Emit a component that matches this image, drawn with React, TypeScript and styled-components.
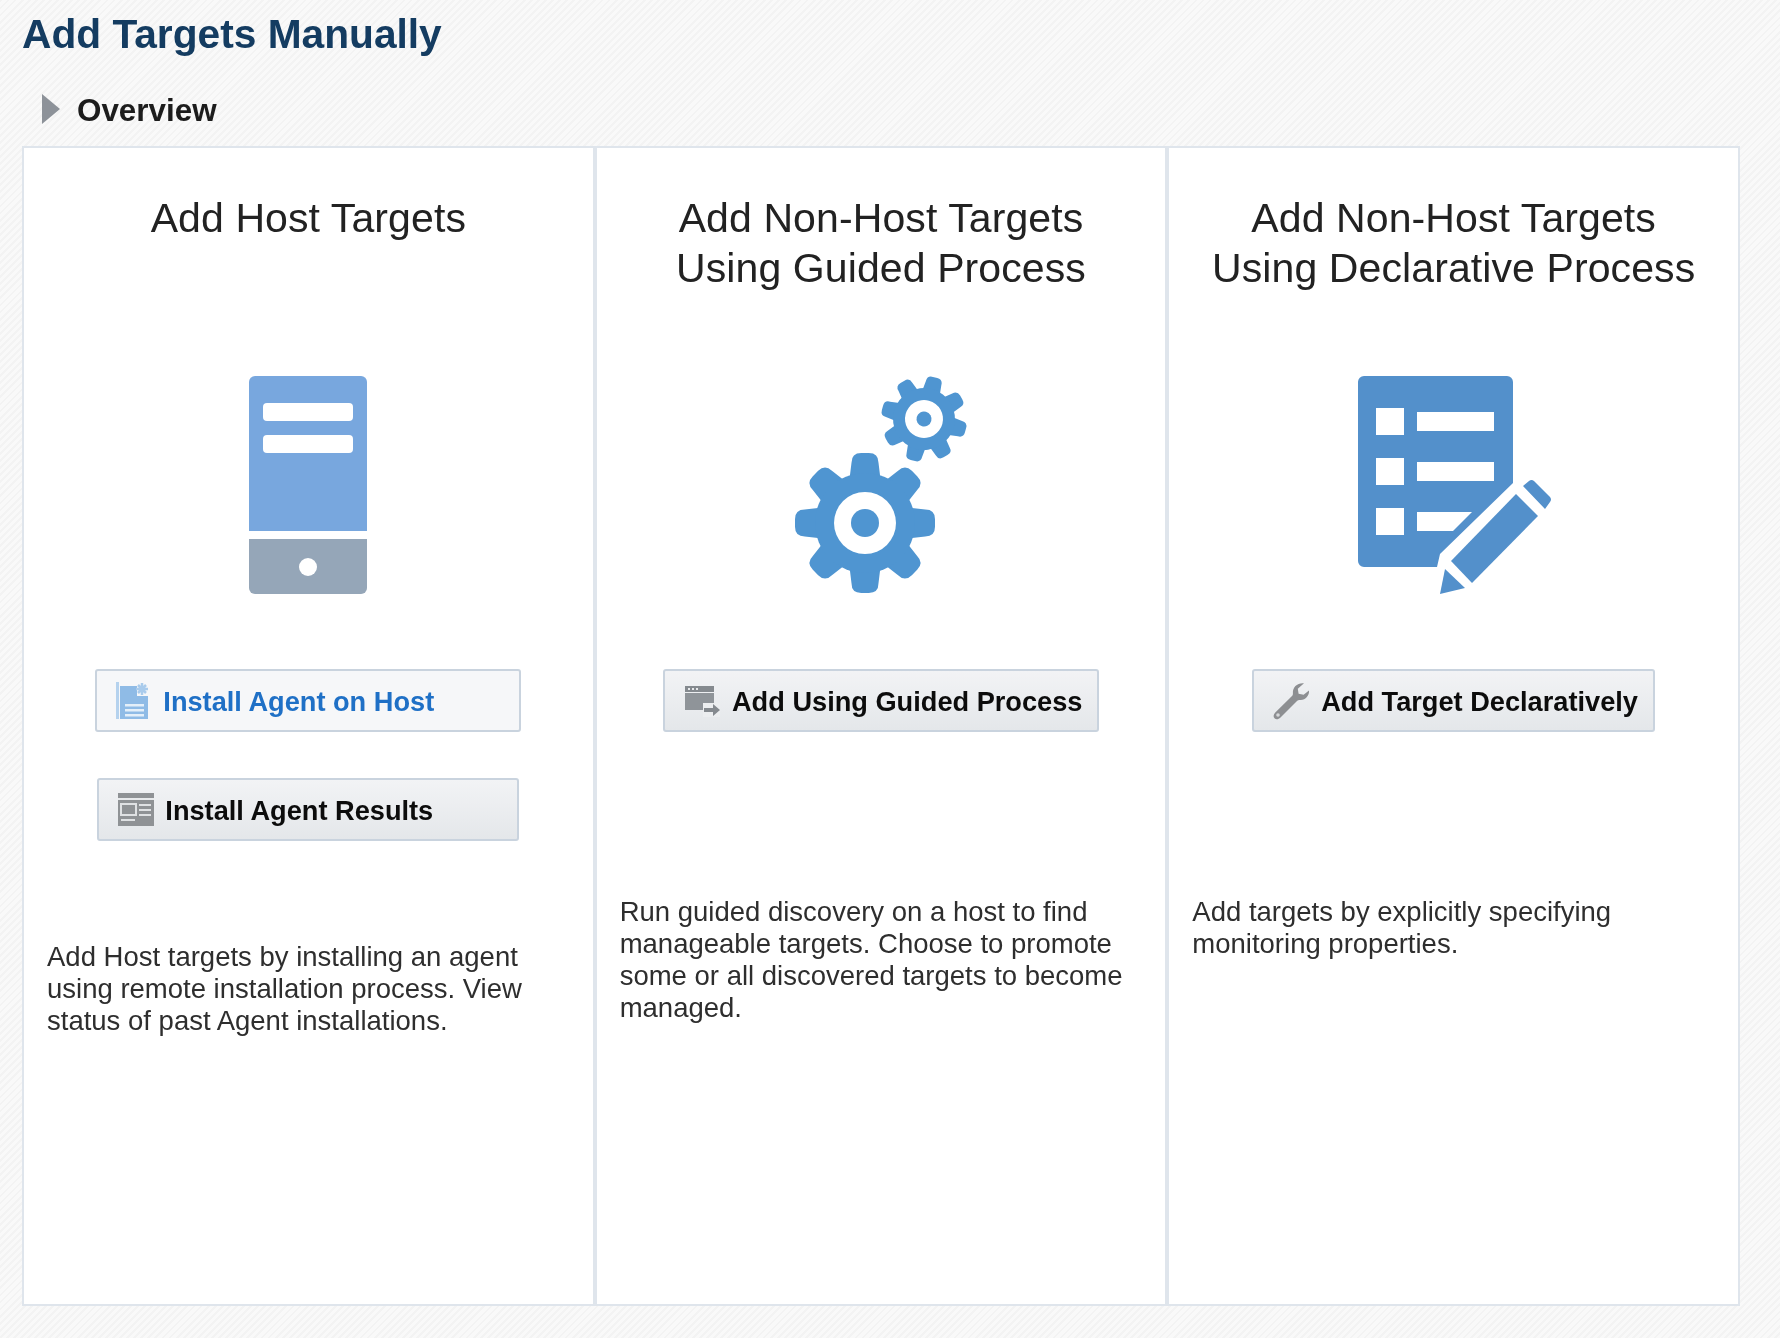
import React from "react";
import styled, { createGlobalStyle } from "styled-components";

const GlobalStyle = createGlobalStyle`
  html, body {
    margin: 0;
    padding: 0;
  }
  body {
    font-family: "Liberation Sans", Arial, sans-serif;
    background-color: #f6f6f6;
    background-image: repeating-linear-gradient(
      135deg,
      #f3f3f3 0,
      #f3f3f3 2px,
      #f9f9f9 2px,
      #f9f9f9 5px
    );
  }
`;

const Page = styled.div`
  box-sizing: border-box;
  width: 1780px;
  height: 1338px;
  padding: 10px 40px 0 22px;
  overflow: hidden;
  filter: blur(0.4px);
`;

const Title = styled.h1`
  margin: 0;
  font-size: 40.7px;
  line-height: 48px;
  font-weight: 700;
  color: #143c61;
`;

const OverviewRow = styled.div`
  display: flex;
  align-items: center;
  gap: 17px;
  height: 38px;
  margin: 33px 0 17px 20px;
`;

const Triangle = styled.span`
  width: 0;
  height: 0;
  border-left: 18px solid #8d9299;
  border-top: 15px solid transparent;
  border-bottom: 15px solid transparent;
  margin-top: -2px;
`;

const OverviewLabel = styled.span`
  padding-top: 2px;
  font-size: 31.4px;
  font-weight: 700;
  color: #1c1c1c;
`;

const Columns = styled.div`
  display: grid;
  grid-template-columns: repeat(3, 1fr);
`;

const Card = styled.section`
  box-sizing: border-box;
  height: 1160px;
  padding-top: 45px;
  background: #fff;
  border: 2px solid #dfe5ec;
  display: flex;
  flex-direction: column;
`;

const CardTitle = styled.h2`
  margin: 0;
  height: 100px;
  font-size: 41px;
  line-height: 50px;
  font-weight: 400;
  letter-spacing: 0.1px;
  text-align: center;
  color: #222;
`;

const Art = styled.div`
  height: 220px;
  margin-top: 83px;
  display: flex;
  justify-content: center;
`;

const Actions = styled.div<{ $height: number }>`
  min-height: ${(p) => p.$height}px;
  margin-top: 73px;
  display: flex;
  flex-direction: column;
  align-items: center;
  gap: 46px;
`;

const Button = styled.button<{ $width: number; $link?: boolean }>`
  box-sizing: border-box;
  width: ${(p) => p.$width}px;
  height: 63px;
  padding: 0 0 0 19px;
  display: flex;
  align-items: center;
  gap: 11px;
  border: 2px solid #c9d3de;
  border-radius: 3px;
  font-family: inherit;
  font-size: 27.2px;
  font-weight: 700;
  text-align: left;
  white-space: nowrap;
  color: ${(p) => (p.$link ? "#1f70c6" : "#0c0c0c")};
  background: ${(p) =>
    p.$link ? "#f6f7f9" : "linear-gradient(#f2f3f5, #e4e7ea)"};
`;

const ButtonLabel = styled.span`
  padding-top: 2px;
`;

const Description = styled.p`
  margin: 0;
  padding: 0 23px;
  font-size: 27.5px;
  line-height: 32px;
  color: #2e2e2e;
`;

const InstallIcon = () => (
  <svg width="36" height="38" viewBox="0 0 36 38">
    <path d="M0 0h3v37H0z" fill="#b5d2ee" />
    <path d="M4 4h17v10h11v23H4z" fill="#8fbbe6" />
    <path d="M9 22h19v2.500H9zM9 27h19v2.500H9zM9 32h19v2.500H9z" fill="#e4eff9" />
    <path
      d="M26 1v12M20 7h12M22 3l8 8M30 3l-8 8"
      stroke="#a9cbec"
      strokeWidth="2.500"
      fill="none"
    />
  </svg>
);

const ResultsIcon = () => (
  <svg width="36" height="33" viewBox="0 0 36 33">
    <path d="M0 0h36v33H0z" fill="#8f9295" />
    <path d="M0 5h36v2H0z" fill="#e8eaec" />
    <path d="M3 11h15v11H3z" fill="none" stroke="#dfe1e3" strokeWidth="2" />
    <path d="M21 11h12v2H21zM21 16h12v2H21zM21 21h12v2H21zM3 26h14v2H3z" fill="#dfe1e3" />
  </svg>
);

const GuidedIcon = () => (
  <svg width="37" height="32" viewBox="0 0 37 32">
    <path d="M1 1h29v6H1z" fill="#858a8f" />
    <path d="M1 8h29v17H1z" fill="#8f9499" />
    <path d="M4 3h2v2H4zM8 3h2v2H8zM12 3h2v2h-2z" fill="#e8eaec" />
    <path d="M19 18h17v14H19z" fill="#eceef0" />
    <path d="M20 23h9v-4l7 6-7 6v-4h-9z" fill="#858a8f" />
  </svg>
);

const WrenchIcon = () => (
  <svg width="37" height="38" viewBox="0 0 37 38">
    <path
      d="M36 8.500c.6 5-3.800 10-9 9.500-1.400-.1-2.200.2-3 1L7.500 35.500c-2 2-4.500 2.300-6 .8s-1-4 .8-5.800L19 14c.8-.8 1-1.600.9-3C19.500 5 24.500.5 31 1.200l-6.200 5.600.8 5 5 1z"
      fill="#8d8f92"
    />
    <circle cx="5" cy="33" r="1.800" fill="#d6d8da" />
  </svg>
);

const ServerArt = () => (
  <svg width="118" height="218" viewBox="0 0 118 218">
    <path d="M6 0h106a6 6 0 0 1 6 6v149H0V6a6 6 0 0 1 6-6z" fill="#78a7de" />
    <rect x="14" y="27" width="90" height="18" rx="4" fill="#fff" />
    <rect x="14" y="59" width="90" height="18" rx="4" fill="#fff" />
    <path d="M0 163h118v49a6 6 0 0 1-6 6H6a6 6 0 0 1-6-6z" fill="#95a6b8" />
    <circle cx="59" cy="191" r="9" fill="#fff" />
  </svg>
);

const Gear = ({
  cx,
  cy,
  outer,
  body,
  hole,
  hub,
  tooth,
  turn,
}: {
  cx: number;
  cy: number;
  outer: number;
  body: number;
  hole: number;
  hub: number;
  tooth: number;
  turn: number;
}) => {
  const tip = tooth / 2;
  const base = tooth * 0.56;
  const corner = tooth * 0.36;
  const toothPath = `M${-base} ${-body + 3}L${-tip} ${-outer + corner}Q${-tip} ${-outer} ${-tip + corner} ${-outer}L${tip - corner} ${-outer}Q${tip} ${-outer} ${tip} ${-outer + corner}L${base} ${-body + 3}Z`;
  return (
    <g transform={`translate(${cx} ${cy}) rotate(${turn})`}>
      {[0, 45, 90, 135, 180, 225, 270, 315].map((a) => (
        <path key={a} d={toothPath} transform={`rotate(${a})`} fill="#4f95d1" />
      ))}
      <circle r={body} fill="#4f95d1" />
      <circle r={hole} fill="#fff" />
      <circle r={hub} fill="#4f95d1" />
    </g>
  );
};

const GearsArt = () => (
  <svg width="200" height="220" viewBox="1 15 200 220">
    <Gear cx={85} cy={162} outer={70} body={50} hole={31} hub={14} tooth={27} turn={0} />
    <Gear cx={144} cy={58} outer={43} body={31} hole={19} hub={7.500} tooth={16} turn={15} />
  </svg>
);

const FormArt = () => (
  <svg width="230" height="220" viewBox="-1 15 230 220">
    <path
      d="M24 15h143a6 6 0 0 1 6 6v101l-73 71-3 13H24a6 6 0 0 1-6-6V21a6 6 0 0 1 6-6z"
      fill="#5390cb"
    />
    <path d="M36 47h28v27H36zM36 97h28v27H36zM36 147h28v27H36z" fill="#fff" />
    <path d="M77 51h77v19H77zM77 101h77v19H77zM77 151h55l-19 19H77z" fill="#fff" />
    <path d="M176 133l22 22-66 67-21-22z" fill="#5390cb" />
    <path d="M183 125l6-5a4 4 0 0 1 5 0l16 16a4 4 0 0 1 0 5l-5 7z" fill="#5390cb" />
    <path d="M105 208l20 19-25 6z" fill="#5390cb" />
  </svg>
);

export default function App() {
  return (
    <>
      <GlobalStyle />
      <Page>
        <Title>Add Targets Manually</Title>
        <OverviewRow>
          <Triangle />
          <OverviewLabel>Overview</OverviewLabel>
        </OverviewRow>
        <Columns>
          <Card>
            <CardTitle>Add Host Targets</CardTitle>
            <Art>
              <ServerArt />
            </Art>
            <Actions $height={272}>
              <Button $width={426} $link>
                <InstallIcon />
                <ButtonLabel>Install Agent on Host</ButtonLabel>
              </Button>
              <Button $width={422}>
                <ResultsIcon />
                <ButtonLabel>Install Agent Results</ButtonLabel>
              </Button>
            </Actions>
            <Description>
              Add Host targets by installing an agent using remote installation
              process. View status of past Agent installations.
            </Description>
          </Card>
          <Card>
            <CardTitle>
              Add Non-Host Targets
              <br />
              Using Guided Process
            </CardTitle>
            <Art>
              <GearsArt />
            </Art>
            <Actions $height={227}>
              <Button $width={436}>
                <GuidedIcon />
                <ButtonLabel>Add Using Guided Process</ButtonLabel>
              </Button>
            </Actions>
            <Description>
              Run guided discovery on a host to find manageable targets. Choose
              to promote some or all discovered targets to become managed.
            </Description>
          </Card>
          <Card>
            <CardTitle>
              Add Non-Host Targets
              <br />
              Using Declarative Process
            </CardTitle>
            <Art>
              <FormArt />
            </Art>
            <Actions $height={227}>
              <Button $width={403}>
                <WrenchIcon />
                <ButtonLabel>Add Target Declaratively</ButtonLabel>
              </Button>
            </Actions>
            <Description>
              Add targets by explicitly specifying monitoring properties.
            </Description>
          </Card>
        </Columns>
      </Page>
    </>
  );
}
